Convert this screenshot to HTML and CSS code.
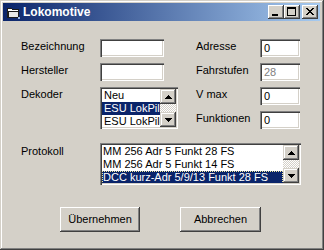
FILE: index.html
```html
<!DOCTYPE html>
<html lang="de">
<head>
<meta charset="utf-8">
<title>Lokomotive</title>
<link rel="stylesheet" href="styles.css">
</head>
<body>
<div class="window">
  <div class="titlebar">
    <svg class="app-icon" width="16" height="16" viewBox="0 0 16 16" shape-rendering="crispEdges">
      <path d="M2 4h4l1 1h6v8H2z" fill="#ffffff" stroke="#1c1c1c" stroke-width="1"/>
      <path d="M4 7h10l-1 6H3z" fill="#e8e8e8" stroke="#1c1c1c" stroke-width="1"/>
      <rect x="13" y="13" width="2" height="2" fill="#9ab8e8"/>
    </svg>
    <span class="title">Lokomotive</span>
    <div class="caption-buttons">
      <span class="cbtn">
        <svg width="16" height="14" viewBox="0 0 16 14" shape-rendering="crispEdges"><rect x="4" y="9" width="6" height="2" fill="#000"/></svg>
      </span>
      <span class="cbtn">
        <svg width="16" height="14" viewBox="0 0 16 14" shape-rendering="crispEdges"><path d="M3 2h9v9H3z M4 4v6h7V4z" fill="#000" fill-rule="evenodd"/></svg>
      </span>
      <span class="cbtn close">
        <svg width="16" height="14" viewBox="0 0 16 14" shape-rendering="crispEdges"><path d="M4 3h2v1h1v1h2V4h1V3h2v1h-1v1h-1v1h-1v1h1v1h1v1h1v1h-2V9H9V8H7v1H6v1H4V9h1V8h1V7h1V6H6V5H5V4H4z" fill="#000"/></svg>
      </span>
    </div>
  </div>

  <div class="form">
    <label class="lbl l1">Bezeichnung</label>
    <div class="edit w64 r1"></div>
    <label class="lbl rlab r1">Adresse</label>
    <div class="edit w40 r1">0</div>

    <label class="lbl">Hersteller</label>
    <div class="edit w64"></div>
    <label class="lbl rlab">Fahrstufen</label>
    <div class="edit w40 disabled">28</div>

    <label class="lbl">Dekoder</label>
    <div class="listbox dekoder">
      <div class="items">
        <div class="item">Neu</div>
        <div class="item sel">ESU LokPilot V1.0</div>
        <div class="item">ESU LokPilot V2.0</div>
      </div>
      <div class="scrollbar">
        <span class="sbtn"><svg width="7" height="4" viewBox="0 0 7 4" shape-rendering="crispEdges"><path d="M3 0h1v1h1v1h1v1h1v1H0V3h1V2h1V1h1z" fill="#000"/></svg></span>
        <span class="track"></span>
        <span class="sbtn"><svg width="7" height="4" viewBox="0 0 7 4" shape-rendering="crispEdges"><path d="M0 0h7v1H6v1H5v1H4v1H3V3H2V2H1V1H0z" fill="#000"/></svg></span>
      </div>
    </div>
    <label class="lbl rlab">V max</label>
    <div class="edit w40">0</div>

    <label class="lbl rlab c3">Funktionen</label>
    <div class="edit w40 c4">0</div>

    <label class="lbl proto-lbl">Protokoll</label>
    <div class="listbox protokoll">
      <div class="items">
        <div class="item">MM 256 Adr 5 Funkt 28 FS</div>
        <div class="item">MM 256 Adr 5 Funkt 14 FS</div>
        <div class="item sel focus">DCC kurz-Adr 5/9/13 Funkt 28 FS</div>
      </div>
      <div class="scrollbar">
        <span class="sbtn"><svg width="7" height="4" viewBox="0 0 7 4" shape-rendering="crispEdges"><path d="M3 0h1v1h1v1h1v1h1v1H0V3h1V2h1V1h1z" fill="#000"/></svg></span>
        <span class="track"></span>
        <span class="sbtn"><svg width="7" height="4" viewBox="0 0 7 4" shape-rendering="crispEdges"><path d="M0 0h7v1H6v1H5v1H4v1H3V3H2V2H1V1H0z" fill="#000"/></svg></span>
      </div>
    </div>
  </div>

  <div class="buttons">
    <button class="btn b1">Übernehmen</button>
    <button class="btn b2">Abbrechen</button>
  </div>
</div>
</body>
</html>
```
FILE: styles.css
```css
* { box-sizing: border-box; }

html, body {
  margin: 0;
  padding: 0;
  background: #d4d0c8;
}

body {
  font-family: "Liberation Sans", Arial, sans-serif;
  font-size: 11px;
  line-height: 13px;
  color: #000;
}

.window {
  width: 324px;
  height: 250px;
  background: #d4d0c8;
  padding: 3px 4px 4px 3px;
  box-shadow:
    inset -1px -1px #404040,
    inset 1px 1px #d4d0c8,
    inset -2px -2px #808080,
    inset 2px 2px #ffffff;
}

/* Title bar */
.titlebar {
  height: 18px;
  display: flex;
  align-items: center;
  padding-left: 2px;
  background: linear-gradient(to right, #0a246a, #a6caf0);
}

.app-icon { flex: none; }

.title {
  margin-left: 2px;
  color: #fff;
  font-weight: bold;
  font-size: 12px;
  line-height: 18px;
}

.caption-buttons {
  margin-left: auto;
  margin-right: 2px;
  display: flex;
}

.cbtn {
  width: 16px;
  height: 14px;
  display: block;
  background: #d4d0c8;
  box-shadow:
    inset -1px -1px #404040,
    inset 1px 1px #ffffff,
    inset -2px -2px #808080;
}

.cbtn svg { display: block; }
.cbtn.close { margin-left: 2px; }

/* Form grid */
.form {
  display: grid;
  grid-template-columns: 79px 96px 64px 41px;
  grid-template-rows: 18px 18px 18px 18px auto;
  row-gap: 6px;
  padding: 18px 0 0 18px;
}

.lbl {
  padding-top: 1px;
  white-space: nowrap;
}

.c3 { grid-column: 3; grid-row: 4; }
.c4 { grid-column: 4; grid-row: 4; }

.edit {
  height: 18px;
  background: #fff;
  padding: 3px 2px 2px 4px;
  white-space: nowrap;
  box-shadow:
    inset 1px 1px #808080,
    inset 2px 2px #404040,
    inset -1px -1px #ffffff,
    inset -2px -2px #d4d0c8;
}

.w64 { width: 64px; }
.w40 { width: 40px; }
.edit.disabled { color: #808080; }

/* List boxes */
.listbox {
  display: flex;
  background: #fff;
  padding: 2px;
  box-shadow:
    inset 1px 1px #808080,
    inset 2px 2px #404040,
    inset -1px -1px #ffffff,
    inset -2px -2px #d4d0c8;
}

.dekoder {
  grid-column: 2;
  grid-row: 3 / span 2;
  width: 78px;
  height: 42px;
}

.proto-lbl {
  grid-column: 1;
  grid-row: 5;
  margin-top: 8px;
  padding-top: 2px;
}

.protokoll {
  grid-column: 2 / span 3;
  grid-row: 5;
  margin-top: 8px;
  height: 42px;
}

.items {
  flex: 1;
  min-width: 0;
  overflow: hidden;
}

.item {
  height: 13px;
  line-height: 13px;
  padding-left: 2px;
  white-space: nowrap;
  overflow: hidden;
}

.protokoll .item { padding-left: 1px; }

.item.sel {
  background: #0a246a;
  color: #fff;
}

.item.focus {
  outline: 1px dotted #f0e8a0;
  outline-offset: -1px;
}

.scrollbar {
  width: 16px;
  flex: none;
  display: flex;
  flex-direction: column;
}

.sbtn {
  height: 15px;
  flex: none;
  display: flex;
  align-items: center;
  justify-content: center;
  background: #d4d0c8;
  box-shadow:
    inset -1px -1px #404040,
    inset 1px 1px #d4d0c8,
    inset -2px -2px #808080,
    inset 2px 2px #ffffff;
}

.sbtn svg { display: block; }

.track {
  flex: 1;
  background: repeating-conic-gradient(#ffffff 0 25%, #d4d0c8 0 50%) 0 0 / 2px 2px;
}

/* Buttons */
.buttons {
  display: flex;
  gap: 40px;
  margin-top: 22px;
  padding-left: 57px;
}

.btn {
  height: 25px;
  font-family: "Liberation Sans", Arial, sans-serif;
  font-size: 11px;
  line-height: 13px;
  color: #000;
  background: #d4d0c8;
  border: none;
  padding: 0;
  box-shadow:
    inset -1px -1px #404040,
    inset 1px 1px #ffffff,
    inset -2px -2px #808080;
}

.b1 { width: 80px; }
.b2 { width: 81px; }
```
